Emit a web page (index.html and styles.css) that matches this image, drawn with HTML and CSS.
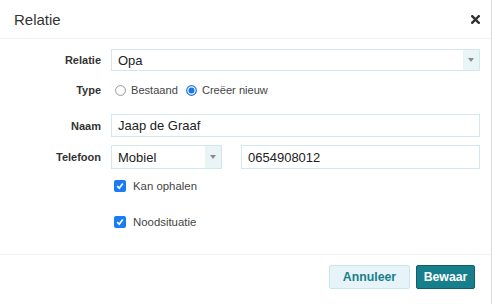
FILE: index.html
```html
<!DOCTYPE html>
<html lang="nl">
<head>
<meta charset="utf-8">
<title>Relatie</title>
<link rel="stylesheet" href="styles.css">
</head>
<body>
<div class="modal">
  <div class="modal-header">
    <h1 class="modal-title">Relatie</h1>
    <span class="close" aria-label="Sluiten">
      <svg width="9" height="9" viewBox="0 0 9 9"><path d="M1.2 1.2 L7.8 7.8 M7.8 1.2 L1.2 7.8" stroke="#333" stroke-width="2.4" stroke-linecap="square"/></svg>
    </span>
  </div>
  <div class="modal-body">
    <div class="row r1">
      <label class="lbl">Relatie</label>
      <div class="select full"><span class="val">Opa</span><span class="arrow"><i></i></span></div>
    </div>
    <div class="row r2">
      <label class="lbl">Type</label>
      <div class="radios">
        <span class="radio"><svg width="11" height="11" viewBox="0 0 11 11"><circle cx="5.5" cy="5.5" r="4.9" fill="#fff" stroke="#8a8a8a" stroke-width="0.9"/></svg></span><span class="rtext">Bestaand</span>
        <span class="radio r-on"><svg width="11" height="11" viewBox="0 0 11 11"><circle cx="5.5" cy="5.5" r="4.8" fill="#fff" stroke="#1a73e8" stroke-width="1.2"/><circle cx="5.5" cy="5.5" r="3" fill="#1a73e8"/></svg></span><span class="rtext">Creëer nieuw</span>
      </div>
    </div>
    <div class="row r3">
      <label class="lbl">Naam</label>
      <div class="input full">Jaap de Graaf</div>
    </div>
    <div class="row r4">
      <label class="lbl">Telefoon</label>
      <div class="phone">
        <div class="select small"><span class="val">Mobiel</span><span class="arrow"><i></i></span></div>
        <div class="input num">0654908012</div>
      </div>
    </div>
    <div class="row r5">
      <span></span>
      <div class="check"><span class="box"><svg width="8" height="8" viewBox="0 0 8 8"><path d="M1.2 4.2 L3.2 6.2 L6.8 1.6" fill="none" stroke="#fff" stroke-width="1.7"/></svg></span><span class="ctext">Kan ophalen</span></div>
    </div>
    <div class="row r6">
      <span></span>
      <div class="check"><span class="box"><svg width="8" height="8" viewBox="0 0 8 8"><path d="M1.2 4.2 L3.2 6.2 L6.8 1.6" fill="none" stroke="#fff" stroke-width="1.7"/></svg></span><span class="ctext">Noodsituatie</span></div>
    </div>
  </div>
  <div class="modal-footer">
    <button class="btn btn-light">Annuleer</button>
    <button class="btn btn-primary">Bewaar</button>
  </div>
</div>
</body>
</html>
```
FILE: styles.css
```css
* { box-sizing: border-box; }
html, body { margin: 0; padding: 0; background: #fff; }
body { font-family: "Liberation Sans", Arial, sans-serif; color: #333; }

.modal {
  width: 492px;
  height: 304px;
  border-right: 1px solid #dcdcdc;
  background: #fff;
}

.modal-header {
  height: 39px;
  border-bottom: 1px solid #eef3f4;
  display: flex;
  align-items: center;
  justify-content: space-between;
  padding: 0 11px 0 14px;
}
.modal-title {
  margin: 0;
  font-size: 15px;
  font-weight: normal;
  color: #333;
  line-height: 1;
  padding-top: 1px;
}
.close { display: flex; align-items: center; padding-top: 1px; }

.modal-body {
  padding: 10px 11px 0 0;
  height: 215px;
}

.row {
  display: grid;
  grid-template-columns: 101px 1fr;
  column-gap: 10px;
  align-items: center;
}
.r1 { height: 22px; }
.r2 { height: 22px; margin-top: 8px; }
.r3 { height: 23px; margin-top: 13px; }
.r4 { height: 24px; margin-top: 8px; }
.r5 { height: 20px; margin-top: 7px; }
.r6 { height: 20px; margin-top: 16px; }

.lbl {
  text-align: right;
  font-weight: bold;
  font-size: 11px;
  color: #333;
}

.select, .input {
  height: 100%;
  border: 1px solid #d3e8ee;
  background: #fff;
  font-size: 13px;
  color: #222;
  display: flex;
  align-items: center;
}
.input { padding-left: 6px; }
.select .val { flex: 1; padding-left: 6px; }
.select .arrow {
  width: 16px;
  height: 100%;
  background: #e9f4f7;
  display: flex;
  align-items: center;
  justify-content: center;
}
.select .arrow i {
  width: 0; height: 0;
  border-left: 3px solid transparent;
  border-right: 3px solid transparent;
  border-top: 4px solid #8c8c8c;
}

.phone { display: flex; height: 100%; gap: 19px; }
.select.small { width: 111px; }
.input.num { flex: 1; }

.radios { display: flex; align-items: center; font-size: 11.1px; color: #444; padding-left: 4px; }
.radio { display: flex; width: 11px; height: 11px; }
.rtext { margin-left: 5px; margin-right: 8px; }

.check { display: flex; align-items: center; padding-left: 3px; font-size: 11.4px; color: #444; }
.box {
  width: 12px; height: 12px;
  background: #1a7cf5;
  border-radius: 2px;
  display: flex; align-items: center; justify-content: center;
}
.ctext { margin-left: 7px; }

.modal-footer {
  border-top: 1px solid #eef3f4;
  display: flex;
  justify-content: flex-end;
  gap: 6px;
  padding: 10px 16px 0 0;
}
.btn {
  height: 24px;
  font-family: "Liberation Sans", Arial, sans-serif;
  font-weight: bold;
  font-size: 12.3px;
  border-radius: 2px;
  padding: 0;
  cursor: pointer;
}
.btn-light {
  width: 81px;
  background: #e6f4f9;
  border: 1px solid #c9e5ee;
  color: #1b7d8b;
}
.btn-primary {
  width: 59px;
  background: #177e8c;
  border: 1px solid #0f5f6a;
  color: #fff;
}
```
